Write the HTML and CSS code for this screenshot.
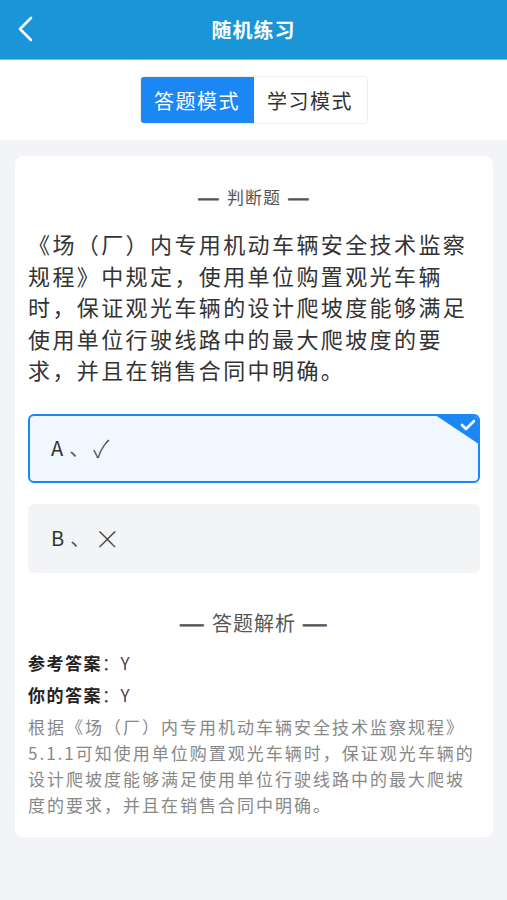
FILE: index.html
```html
<!DOCTYPE html>
<html>
<head>
  <meta charset="UTF-8">
  <meta name="viewport" content="width=device-width, initial-scale=1.0">
  <title>随机练习</title>
  <link rel="stylesheet" href="styles.css">
</head>
<body>
  <div class="nav">
    <span class="back">
      <svg width="18" height="26" viewBox="0 0 18 26"><polyline points="14,2 3,13 14,24" fill="none" stroke="#fff" stroke-width="2.6" stroke-linecap="round" stroke-linejoin="round"/></svg>
    </span>
    <h1>随机练习</h1>
  </div>

  <div class="tabs-bar">
    <div class="tabs">
      <span class="tab active">答题模式</span>
      <span class="tab">学习模式</span>
    </div>
  </div>

  <div class="card">
    <p class="sec-title"><span class="dash">—</span> 判断题 <span class="dash">—</span></p>
    <p class="question">《场（厂）内专用机动车辆安全技术监察规程》中规定，使用单位购置观光车辆时，保证观光车辆的设计爬坡度能够满足使用单位行驶线路中的最大爬坡度的要求，并且在销售合同中明确。</p>

    <div class="options">
      <div class="option selected">
        <span class="opt-text">A<span class="sep">、</span><span class="mark">✓</span></span>
        <span class="corner"></span>
        <svg class="corner-check" width="16" height="12" viewBox="0 0 16 12"><polyline points="2,6 6,10 14,2" fill="none" stroke="#fff" stroke-width="2.6" stroke-linecap="round" stroke-linejoin="round"/></svg>
      </div>
      <div class="option">
        <span class="opt-text">B<span class="sep">、</span><span class="mark cross">×</span></span>
      </div>
    </div>

    <p class="sec-title analysis"><span class="dash">—</span> 答题解析 <span class="dash">—</span></p>
    <p class="answer first"><b>参考答案</b>：Y</p>
    <p class="answer"><b>你的答案</b>：Y</p>
    <p class="explain">根据《场（厂）内专用机动车辆安全技术监察规程》5.1.1可知使用单位购置观光车辆时，保证观光车辆的设计爬坡度能够满足使用单位行驶线路中的最大爬坡度的要求，并且在销售合同中明确。</p>
  </div>
</body>
</html>
```

FILE: styles.css
```css
* {
  margin: 0;
  padding: 0;
  box-sizing: border-box;
}

body {
  font-family: "Noto Sans CJK SC", "Noto Sans", sans-serif;
  background: #f3f4f7;
  color: #333;
  min-height: 900px;
}

.nav {
  height: 60px;
  background: #1a96d8;
  display: flex;
  align-items: center;
  justify-content: center;
  position: relative;
  border-bottom: 1px solid #6cc0ee;
}

.back {
  position: absolute;
  left: 17px;
  top: 16px;
}

.nav h1 {
  color: #fff;
  font-size: 20px;
  font-weight: 700;
  letter-spacing: 1px;
}

.tabs-bar {
  background: #fff;
  height: 80px;
  display: flex;
  justify-content: center;
  padding-top: 16px;
}

.tabs {
  display: flex;
  height: 48px;
  border: 1px solid #eeeeee;
  border-radius: 4px;
  overflow: hidden;
}

.tab {
  width: 113px;
  display: flex;
  align-items: center;
  justify-content: center;
  font-size: 20px;
  letter-spacing: 1.5px;
  color: #333;
}

.tab.active {
  background: #1b87f5;
  color: #fff;
}

.card {
  background: #fff;
  margin: 16px 14px 0 15px;
  border-radius: 8px;
  padding: 29px 13px 19px;
}

.sec-title {
  text-align: center;
  font-size: 17px;
  line-height: 24px;
  color: #555;
  letter-spacing: 1px;
}

.dash {
  display: inline-block;
  transform: scaleX(1.4);
  -webkit-text-stroke: 1.2px #555;
  margin: 0 5px;
}

.question {
  margin-top: 19px;
  font-size: 22px;
  letter-spacing: 2.4px;
  line-height: 31.5px;
  color: #333;
}

.options {
  margin-top: 28px;
  display: flex;
  flex-direction: column;
  gap: 21px;
}

.option {
  height: 69px;
  border-radius: 6px;
  background: #f3f4f6;
  display: flex;
  align-items: center;
  padding-left: 23px;
  position: relative;
  overflow: hidden;
}

.option.selected {
  background: #f0f7ff;
  border: 2px solid #1b87f5;
  padding-left: 21px;
}

.opt-text {
  display: flex;
  align-items: center;
  font-size: 20px;
  line-height: 28px;
  color: #333;
}

.sep {
  color: #555;
  margin: 0 4px 0 6px;
}

.mark {
  font-family: "Noto Sans CJK SC", "DejaVu Sans", sans-serif;
  font-weight: 300;
  font-size: 24px;
  color: #444;
}

.mark.cross {
  font-size: 26px;
}

.corner {
  position: absolute;
  top: 0;
  right: 0;
  width: 42px;
  height: 28px;
  background: #1b87f5;
  clip-path: polygon(0 0, 100% 0, 100% 100%);
}

.corner-check {
  position: absolute;
  top: 3px;
  right: 2px;
}

.analysis {
  margin-top: 36px;
  font-size: 20px;
  line-height: 28px;
  letter-spacing: 1px;
}

.answer {
  font-size: 17px;
  line-height: 32px;
  color: #444;
  letter-spacing: 1.5px;
}

.answer.first {
  margin-top: 10px;
}

.answer b {
  color: #222;
}

.explain {
  margin-top: 3px;
  font-size: 17px;
  line-height: 26px;
  color: #888;
  letter-spacing: 2px;
}
```
